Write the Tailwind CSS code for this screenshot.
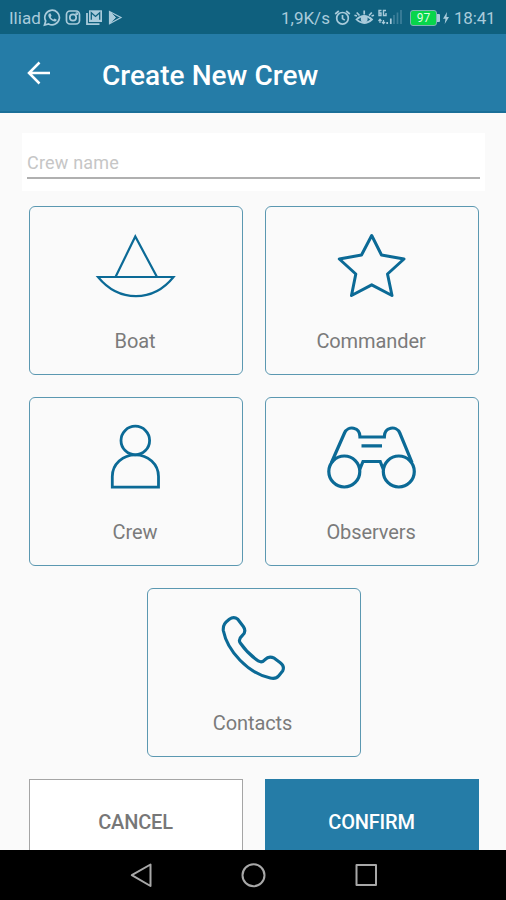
<!DOCTYPE html>
<html lang="en">
<head>
<meta charset="utf-8">
<title>Create New Crew</title>
<script src="https://cdn.jsdelivr.net/npm/@tailwindcss/browser@4"></script>
</head>
<body class="w-[506px] h-[900px] overflow-hidden bg-[#fafafa] font-[Roboto,sans-serif] flex flex-col">
  <div class="h-[34px] shrink-0 bg-[#0f607e] flex items-center justify-between pl-[9px] pr-[11px] pt-[2px] text-[#a9cbdb] text-[17px] leading-none">
    <div class="flex items-center">
      <span class="w-[34px] text-[17px] whitespace-nowrap">Iliad</span>
      <svg class="w-[82px] h-[20px]" viewBox="42.500 8 82 20" fill="none" stroke="currentColor" stroke-width="1.7">
        <path d="M44 25l1.200-4a7.300 7.300 0 1 1 2.900 2.900z"/>
        <path d="M48.300 13.800l1.600-.5 1.200 2.500-.9 1.200c.6 1.300 1.500 2.100 2.800 2.600l1.100-1 2.200 1.200c-.5 2-2.200 2.100-3.900 1.300-2.300-1-4.500-3.600-4.600-5.600z" fill="currentColor" stroke="none"/>
        <rect x="66" y="11" width="13" height="13" rx="3.500"/><circle cx="72.500" cy="17.500" r="3.200"/><circle cx="76.300" cy="13.800" r=".6"/>
        <path d="M86.500 13v11.200h12.500" stroke-width="1.800"/>
        <rect x="88.500" y="10.300" width="13" height="11.700" fill="currentColor" stroke="none"/>
        <path d="M90.800 19.800v-7l4.200 3.700 4.200-3.700v7" stroke="#0f607e" stroke-width="1.300"/>
        <path d="M109 11.500l11.500 6-11.500 6.200z" stroke-width="1.200"/><path d="M109 11.500l6 6-6 6.200z" fill="currentColor" stroke-width="1"/>
      </svg>
    </div>
    <div class="flex items-center">
      <span class="w-[51px] text-[17px] whitespace-nowrap">1,9K/s</span>
      <svg class="w-[70px] h-[20px]" viewBox="335 8 70 20" fill="none" stroke="currentColor" stroke-width="1.700">
        <circle cx="345.500" cy="18.300" r="5.800"/><path d="M345.500 15v3.600l2.300 1.500M338.200 14l3.600-3M352.800 14l-3.600-3"/>
        <path d="M359.500 19.500q7.500-7 15.500 0q-8 7-15.500 0z"/><circle cx="367.200" cy="19" r="2.600" fill="currentColor"/><path d="M367.200 14.500v-4M362.500 15.500l-2.800-3M372 15.500l2.800-3M360 16l-2.500-.8M374.500 16l2.500-.8"/>
        <path d="M384.500 10.500h-2.500v5h2v-2.500h-2M389 10.500h-2.500v5h2.500v-2.500" stroke-width="1.400"/>
        <path d="M381.500 21l1.500-1.800 1.500 1.800M383 19.500v3.500M385 22l1.500 1.700 1.500-1.700M386.500 20v3.500" stroke-width="1.200"/>
        <path d="M390.200 24v-2M393.800 24v-5.500"/><path d="M397 24v-9M400.500 24v-11.500M404 24v-14" opacity=".3"/>
      </svg>
      <div class="ml-[8px] w-[27px] h-[16px] rounded-[3px] border-[1.5px] border-[#7fb4b6] bg-[#08d54b] text-[#dcffe2] text-[12px] flex items-center justify-center">97</div>
      <div class="w-[3px] h-[8px] bg-[#a9cbdb] rounded-r-[1px]"></div>
      <svg class="ml-[2px] w-[8px] h-[14px]" viewBox="0 0 8 14" fill="currentColor"><path d="M5 1L1 7.800h2.500L2.700 13 7 6H4.500z"/></svg>
      <span class="ml-[4px] w-[41px] text-[17px] tracking-[-0.2px] whitespace-nowrap">18:41</span>
    </div>
  </div>

  <div class="h-[79px] shrink-0 bg-[#257ca7] border-b-2 border-[#1a6f98] flex items-center pl-[27px] text-white">
    <svg class="w-[25px] h-[24px] mt-px" viewBox="0.500 0 25 24" fill="none" stroke="currentColor" stroke-width="2.500"><path d="M23.500 12H2.500M13 1.500L2.500 12 13 22.500"/></svg>
    <h1 class="ml-[50px] mt-[6px] text-[28px] font-medium leading-none tracking-[0.05px] whitespace-nowrap">Create New Crew</h1>
  </div>

  <main class="h-[737px] shrink-0 overflow-hidden flex flex-col">
    <div class="mt-[20px] ml-[22px] w-[463px] h-[58px] shrink-0 bg-white px-[5px] pt-[17px]">
      <div class="h-[29px] border-b-2 border-[#b0b0b0] text-[#c6c6c6] text-[18px] leading-[25px] tracking-[0.2px]">Crew name</div>
    </div>

    <div class="mt-[15px] mx-[29px] w-[450px] flex flex-wrap justify-center gap-x-[22px] gap-y-[22px] text-[#7b7b7b] text-[20px] tracking-[-0.1px]">
      <div class="w-[214px] h-[169px] rounded-[6px] border-[1.5px] border-[#5b98b1] flex flex-col items-center">
        <svg class="mt-[23px] w-[90px] h-[72px]" viewBox="91 230 90 72" fill="none" stroke="#0b6a96" stroke-width="2.200"><path d="M115.500 277L135.300 236.500 157 277M98 277h75.500C153 302.500 119 302.500 98 277z"/></svg>
        <span class="mt-[27px] pr-[2px] leading-[24px]">Boat</span>
      </div>
      <div class="w-[214px] h-[169px] rounded-[6px] border-[1.5px] border-[#5b98b1] flex flex-col items-center">
        <svg class="mt-[23px] w-[90px] h-[72px]" viewBox="327 230 90 72" fill="none" stroke="#0b6a96" stroke-width="3" stroke-linejoin="round"><path d="M371.700 235.500L381.500 255l22.500 4-16.500 15 4.500 21.500-20.300-10.700-20.200 10.700 4.300-21.500-16.500-15 22.200-4z"/></svg>
        <span class="mt-[27px] pr-[2px] leading-[24px]">Commander</span>
      </div>
      <div class="w-[214px] h-[169px] rounded-[6px] border-[1.5px] border-[#5b98b1] flex flex-col items-center">
        <svg class="mt-[23px] w-[90px] h-[72px]" viewBox="91 420.500 90 72" fill="none" stroke="#0b6a96" stroke-width="2.800"><circle cx="135.300" cy="440" r="14.300"/><path d="M112.300 486.700V476c0-12.500 10.500-21.700 23.100-21.700s23.100 9.200 23.100 21.700v10.700z"/></svg>
        <span class="mt-[27px] pr-[2px] leading-[24px]">Crew</span>
      </div>
      <div class="w-[214px] h-[169px] rounded-[6px] border-[1.5px] border-[#5b98b1] flex flex-col items-center">
        <svg class="mt-[23px] w-[92px] h-[72px]" viewBox="326 420.500 92 72" fill="none" stroke="#0b6a96" stroke-width="3.200"><circle cx="344.300" cy="471" r="15.500"/><circle cx="398.800" cy="471" r="15.500"/><path d="M331.500 462L344.500 432.500c3.500-8 15.500-6 15.500 4h24.300c0-10 12-12 15.500-4L412 462M359.500 469.500L363 461h17.200l3.400 8.500M361.500 445.300h20.500"/></svg>
        <span class="mt-[27px] pr-[2px] leading-[24px]">Observers</span>
      </div>
      <div class="w-[214px] h-[169px] rounded-[6px] border-[1.5px] border-[#5b98b1] flex flex-col items-center">
        <svg class="mt-[23px] w-[90px] h-[72px]" viewBox="209.200 612 90 72" fill="none" stroke="#0b6a96" stroke-width="3.100" stroke-linejoin="round"><path d="M229.500 619.300q4.500-3.300 8.500 0l5.500 7.200q3.500 5-1 9t-2 7.500q7.500 11 18.500 18.200 3.300 1.800 6.500-1.800 3.500-4 9-1.200l6 4.500q4.500 3.300 2.500 8l-4 5q-3 3.700-8.500 2.300c-22-4.500-43-27-47-47.500-.5-6 2-8 6-11.200z"/></svg>
        <span class="mt-[27px] pr-[3px] leading-[24px]">Contacts</span>
      </div>
    </div>

    <div class="mt-[22px] mx-[29px] w-[450px] flex gap-[22px] shrink-0 text-[20px] font-medium tracking-[-0.2px]">
      <div class="w-[214px] h-[86px] bg-white border-[1.5px] border-[#a5a5a5] text-[#777] flex items-center justify-center pr-px">CANCEL</div>
      <div class="w-[214px] h-[86px] bg-[#257ca7] text-white flex items-center justify-center pr-px">CONFIRM</div>
    </div>
  </main>

  <nav class="h-[50px] shrink-0 bg-black">
    <svg class="w-[506px] h-[50px]" viewBox="0 850 506 50" fill="none" stroke="#a8a8a8" stroke-width="2" stroke-linejoin="round"><path d="M150.500 864.500v21.500l-18.700-10.800z"/><circle cx="253.500" cy="875.200" r="11"/><rect x="356.500" y="865" width="19.500" height="20"/></svg>
  </nav>
</body>
</html>
